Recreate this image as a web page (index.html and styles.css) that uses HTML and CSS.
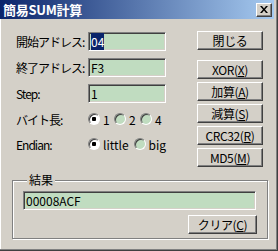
FILE: index.html
```html
<!DOCTYPE html>
<html lang="ja">
<head>
  <meta charset="UTF-8" />
  <title>簡易SUM計算</title>
  <link rel="stylesheet" href="styles.css">
</head>
<body>

  <div class="window">
    <div class="titlebar">
      <span class="title">簡易SUM計算</span>
      <span class="close-box">
        <svg width="8" height="7" viewBox="0 0 8 7">
          <path d="M0 0h2l2 2.5 2-2.5h2l-3 3.5 3 3.5h-2l-2-2.5-2 2.5h-2l3-3.5z" fill="#000"/>
        </svg>
      </span>
    </div>

    <div class="main">
      <div class="form">
        <span class="label">開始アドレス:</span>
        <div class="field"><span class="sel">04</span></div>

        <span class="label">終了アドレス:</span>
        <div class="field">F3</div>

        <span class="label">Step:</span>
        <div class="field">1</div>

        <span class="label">バイト長:</span>
        <div class="options">
          <span class="opt byte"><span class="radio on"></span>1</span>
          <span class="opt byte"><span class="radio"></span>2</span>
          <span class="opt byte"><span class="radio"></span>4</span>
        </div>

        <span class="label">Endian:</span>
        <div class="options">
          <span class="opt little"><span class="radio on"></span>little</span>
          <span class="opt"><span class="radio"></span>big</span>
        </div>
      </div>

      <div class="buttons">
        <button class="btn close-btn">閉じる</button>
        <button class="btn">XOR(<u>X</u>)</button>
        <button class="btn">加算(<u>A</u>)</button>
        <button class="btn">減算(<u>S</u>)</button>
        <button class="btn">CRC32(<u>R</u>)</button>
        <button class="btn">MD5(<u>M</u>)</button>
      </div>
    </div>

    <fieldset class="group">
      <legend>結果</legend>
      <div class="field result">00008ACF</div>
      <div class="group-foot">
        <button class="btn clear-btn">クリア(<u>C</u>)</button>
      </div>
    </fieldset>
  </div>

</body>
</html>
```

FILE: styles.css
```css
body {
  margin: 0;
  background: #d4d0c8;
  font-family: "Noto Sans CJK JP", "DejaVu Sans", sans-serif;
  font-size: 12px;
  color: #000;
}

.window {
  width: 278px;
  height: 251px;
  box-sizing: border-box;
  padding-right: 3px;
  background: #d4d0c8;
  border-right: 1px solid #404040;
  border-bottom: 1px solid #404040;
  box-shadow: inset -1px -1px #808080, inset 1px 0 #fff;
}

.titlebar {
  height: 19px;
  display: flex;
  align-items: center;
  justify-content: space-between;
  padding: 0 2px 0 3px;
  background: linear-gradient(to right, #0a246a, #a6caf0);
}

.title {
  color: #fff;
  font-weight: bold;
  font-size: 13px;
  line-height: 19px;
  letter-spacing: -0.3px;
}

.close-box {
  width: 16px;
  height: 14px;
  box-sizing: border-box;
  display: flex;
  align-items: center;
  justify-content: center;
  background: #d4d0c8;
  border: 1px solid;
  border-color: #fff #404040 #404040 #fff;
  box-shadow: inset -1px -1px #808080;
}

.main {
  display: flex;
  padding: 12px 0 0 16px;
}

.form {
  width: 150px;
  padding-top: 1px;
  display: grid;
  grid-template-columns: 72px 78px;
  grid-template-rows: 19px 19px 19px 18px 18px;
  row-gap: 7px;
  align-items: center;
}

.label {
  line-height: 15px;
  letter-spacing: -1px;
}

.field {
  height: 19px;
  box-sizing: border-box;
  padding: 1px 0 0 2px;
  line-height: 15px;
  background: #c0dcc0;
  border: 1px solid;
  border-color: #808080 #fff #fff #808080;
  box-shadow: inset 1px 1px #404040, inset -1px -1px #d4d0c8;
}

.sel {
  background: #0a246a;
  color: #fff;
}

.options {
  display: flex;
  align-items: center;
  line-height: 15px;
}

.opt {
  display: flex;
  align-items: center;
  gap: 3px;
}

.opt.byte {
  width: 27px;
}

.opt.little {
  width: 49px;
}

.radio {
  width: 12px;
  height: 12px;
  box-sizing: border-box;
  border-radius: 50%;
  border: 1px solid;
  border-color: #808080 #fff #fff #808080;
  box-shadow: inset 1px 1px #404040;
  background: #c0dcc0;
}

.radio.on {
  background: radial-gradient(circle, #000 2px, #fff 2.5px);
}

.buttons {
  margin-left: 31px;
  display: flex;
  flex-direction: column;
  gap: 3px;
}

.btn {
  width: 66px;
  height: 19px;
  box-sizing: border-box;
  padding: 0;
  font-family: inherit;
  font-size: 12px;
  line-height: 15px;
  color: #000;
  background: #d4d0c8;
  border: 1px solid;
  border-color: #fff #404040 #404040 #fff;
  box-shadow: inset -1px -1px #808080;
  letter-spacing: -0.4px;
}

.close-btn {
  margin-bottom: 7px;
}

.group {
  margin: 6px 0 0 12px;
  width: 256px;
  height: 66px;
  box-sizing: border-box;
  padding: 4px 10px 0 10px;
  border: 1px solid #808080;
  box-shadow: inset 1px 1px #fff, 1px 1px #fff;
}

.group legend {
  padding: 0 2px;
  margin-left: 4px;
  line-height: 14px;
  background: #d4d0c8;
}

.result {
  width: 233px;
}

.group-foot {
  display: flex;
  justify-content: flex-end;
  margin-top: 5px;
}

.clear-btn {
  width: 69px;
}
```
